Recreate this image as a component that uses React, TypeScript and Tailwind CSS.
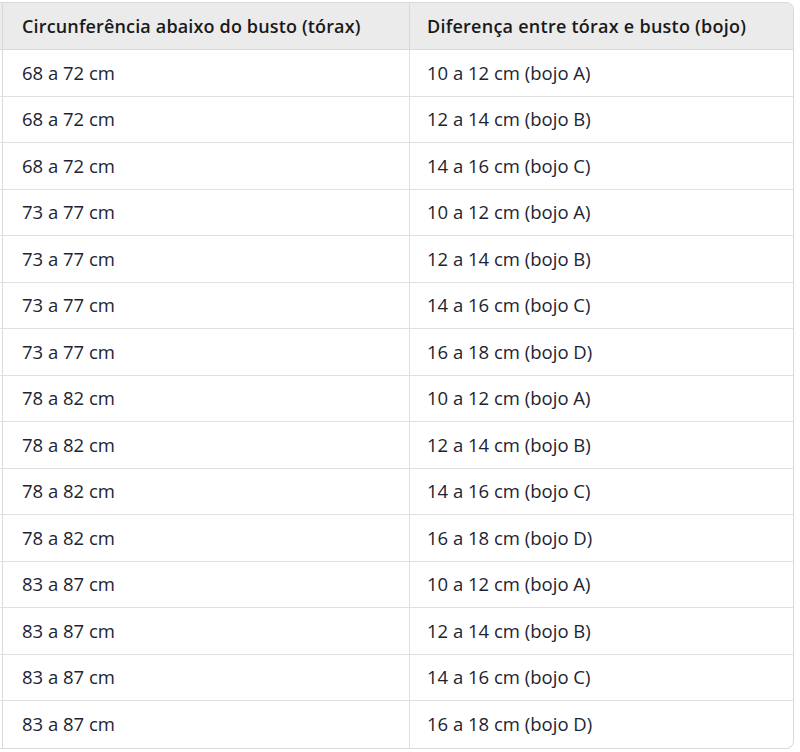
import React from "react";

const rows: [string, string][] = [
  ["68 a 72 cm", "10 a 12 cm (bojo A)"],
  ["68 a 72 cm", "12 a 14 cm (bojo B)"],
  ["68 a 72 cm", "14 a 16 cm (bojo C)"],
  ["73 a 77 cm", "10 a 12 cm (bojo A)"],
  ["73 a 77 cm", "12 a 14 cm (bojo B)"],
  ["73 a 77 cm", "14 a 16 cm (bojo C)"],
  ["73 a 77 cm", "16 a 18 cm (bojo D)"],
  ["78 a 82 cm", "10 a 12 cm (bojo A)"],
  ["78 a 82 cm", "12 a 14 cm (bojo B)"],
  ["78 a 82 cm", "14 a 16 cm (bojo C)"],
  ["78 a 82 cm", "16 a 18 cm (bojo D)"],
  ["83 a 87 cm", "10 a 12 cm (bojo A)"],
  ["83 a 87 cm", "12 a 14 cm (bojo B)"],
  ["83 a 87 cm", "14 a 16 cm (bojo C)"],
  ["83 a 87 cm", "16 a 18 cm (bojo D)"],
];

export default function App() {
  return (
    <div className="w-[800px] h-[752px] bg-white pt-[2px] font-['Open_Sans',sans-serif] text-[18px]">
      <div className="w-[794px] border-t border-r border-b border-[#d9d9d9] rounded-tr-[8px] rounded-br-[8px] overflow-hidden">
        <div className="flex h-[47px] bg-[#ebebeb] border-b border-[#d9d9d9] font-semibold text-[#1a1a1a]">
          <div className="w-[3px] border-r border-[#d9d9d9]" />
          <div className="w-[407px] border-r border-[#d9d9d9] flex items-center pl-[19px] tracking-[0.15px]">
            Circunferência abaixo do busto (tórax)
          </div>
          <div className="flex-1 flex items-center pl-[17px] tracking-[0.25px]">
            Diferença entre tórax e busto (bojo)
          </div>
        </div>
        {rows.map(([a, b], i) => (
          <div
            key={i}
            className={
              "flex h-[46.5px] text-[18.5px] text-[#1c2433] " +
              (i < rows.length - 1 ? "border-b border-[#e0e0e0]" : "")
            }
          >
            <div className="w-[3px] border-r border-[#d9d9d9]" />
            <div className="w-[407px] border-r border-[#e0e0e0] flex items-center pl-[19px]">
              {a}
            </div>
            <div className="flex-1 flex items-center pl-[17px]">{b}</div>
          </div>
        ))}
      </div>
    </div>
  );
}
